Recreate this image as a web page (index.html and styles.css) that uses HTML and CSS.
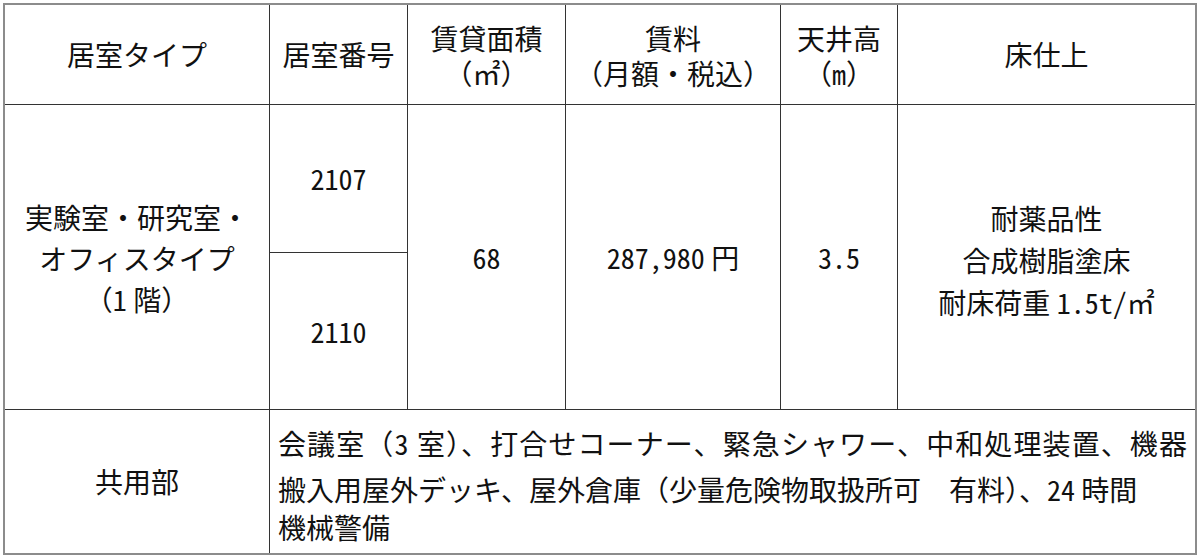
FILE: index.html
```html
<!DOCTYPE html>
<html lang="ja">
<head>
<meta charset="utf-8">
<title>居室一覧</title>
<link rel="stylesheet" href="styles.css">
</head>
<body>
<div class="sheet">
  <div class="cell head"><div class="txt">居室タイプ</div></div>
  <div class="cell head"><div class="txt">居室番号</div></div>
  <div class="cell head two"><div class="txt">賃貸面積<br>（㎡）</div></div>
  <div class="cell head two"><div class="txt">賃料<br>（月額・税込）</div></div>
  <div class="cell head two"><div class="txt">天井高<br>（<span class="num">m</span>）</div></div>
  <div class="cell head"><div class="txt">床仕上</div></div>

  <div class="cell tall type"><div class="txt">実験室・研究室・<br>オフィスタイプ<br>（<span class="num">1</span> 階）</div></div>
  <div class="cell room"><div class="txt"><span class="num">2107</span></div></div>
  <div class="cell tall"><div class="txt"><span class="num">68</span></div></div>
  <div class="cell tall"><div class="txt"><span class="num">287,980</span> 円</div></div>
  <div class="cell tall"><div class="txt"><span class="num">3.5</span></div></div>
  <div class="cell tall floor"><div class="txt">耐薬品性<br>合成樹脂塗床<br>耐床荷重 <span class="num">1.5t/</span>㎡</div></div>
  <div class="cell room"><div class="txt"><span class="num">2110</span></div></div>

  <div class="cell common-label"><div class="txt">共用部</div></div>
  <div class="cell common">
    <div class="line first">会議室（<span class="num">3</span> 室）、打合せコーナー、緊急シャワー、中和処理装置、機器</div>
    <div class="line">搬入用屋外デッキ、屋外倉庫（少量危険物取扱所可　有料）、<span class="num">24</span> 時間</div>
    <div class="line">機械警備</div>
  </div>
</div>
</body>
</html>
```

FILE: styles.css
```css
html, body {
  margin: 0;
  padding: 0;
  background: #ffffff;
}

body {
  font-family: "Noto Sans CJK JP", "Noto Sans", sans-serif;
  font-size: 28px;
  color: #111111;
}

.sheet {
  margin: 3px 0 0 3px;
  width: 1190px;
  border: 2px solid #8c8c8c;
  background: #333333;
  display: grid;
  grid-template-columns: 264px 137px 157px 214px 116px 297px;
  grid-template-rows: 99px 147px 156px 143px;
  gap: 1px;
}

.cell {
  background: #ffffff;
  display: flex;
  align-items: center;
  justify-content: center;
  text-align: center;
  line-height: 35px;
}

.txt {
  white-space: nowrap;
}

.head.two {
  padding-top: 2px;
}

.tall {
  grid-row: span 2;
}

.type {
  line-height: 41px;
  padding-top: 2px;
}

.floor {
  line-height: 42px;
  padding-top: 5px;
}

.room {
  padding-top: 0;
}

.num {
  font-feature-settings: "hwid" 1;
}

.common-label {
  padding-top: 0;
}

.common {
  grid-column: span 5;
  flex-direction: column;
  align-items: flex-start;
  justify-content: flex-start;
  text-align: left;
  padding: 14px 0 0 8px;
}

.line {
  white-space: nowrap;
  line-height: 38px;
}

.line.first {
  margin-bottom: 8px;
  letter-spacing: 1.1px;
}
```
